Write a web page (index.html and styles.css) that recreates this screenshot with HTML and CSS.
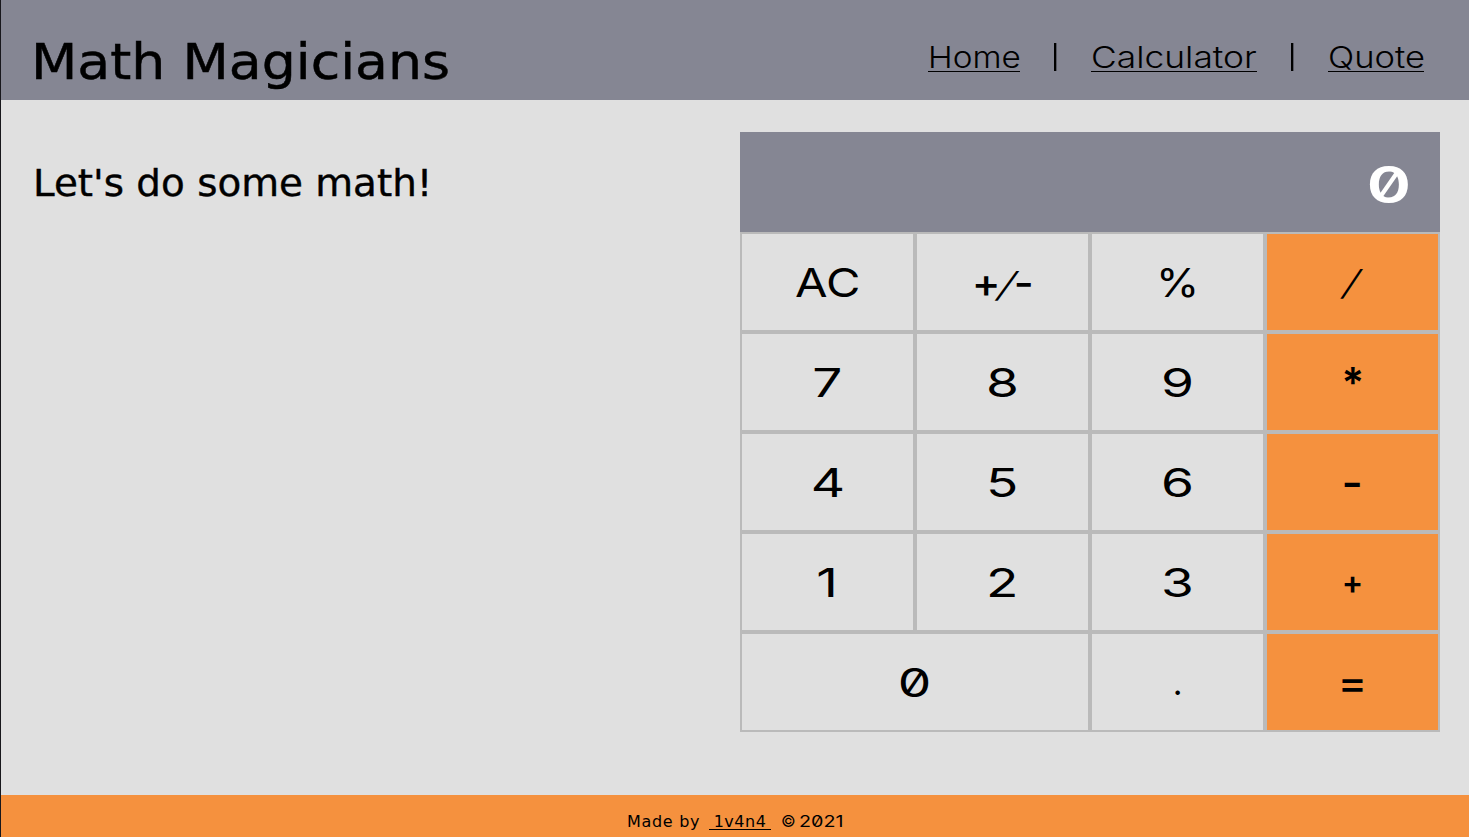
FILE: index.html
```html
<!DOCTYPE html>
<html lang="en">
<head>
<meta charset="utf-8">
<title>Math Magicians</title>
<link rel="stylesheet" href="styles.css">
</head>
<body>
<div class="app">
  <header class="header">
    <h1 class="title">Math Magicians</h1>
    <nav class="nav">
      <a class="nav-link home" href="#"><span>Home</span></a>
      <span class="divider"></span>
      <a class="nav-link calculator-link" href="#"><span>Calculator</span></a>
      <span class="divider"></span>
      <a class="nav-link quote" href="#"><span>Quote</span></a>
    </nav>
  </header>
  <main class="main">
    <h2 class="subtitle">Let's do some math!</h2>
    <section class="calculator">
      <div class="display"><span class="digit">0</span></div>
      <button class="key"><span class="letters">AC</span></button>
      <button class="key"><span class="sign">+<span class="slash">/</span>-</span></button>
      <button class="key"><span class="percent">%</span></button>
      <button class="key operator"><span class="slash">/</span></button>
      <button class="key"><span class="digit">7</span></button>
      <button class="key"><span class="digit">8</span></button>
      <button class="key"><span class="digit">9</span></button>
      <button class="key operator"><span class="star">*</span></button>
      <button class="key"><span class="digit">4</span></button>
      <button class="key"><span class="digit">5</span></button>
      <button class="key"><span class="digit">6</span></button>
      <button class="key operator"><span class="minus">-</span></button>
      <button class="key"><span class="digit">1</span></button>
      <button class="key"><span class="digit">2</span></button>
      <button class="key"><span class="digit">3</span></button>
      <button class="key operator"><span class="plus">+</span></button>
      <button class="key wide"><span class="digit">0</span></button>
      <button class="key"><span class="point">.</span></button>
      <button class="key operator"><span class="equals">=</span></button>
    </section>
  </main>
  <footer class="footer">
    <span class="made">Made by</span>
    <a class="author" href="#">1v4n4</a>
    <span class="copy">©</span>
    <span class="year">2021</span>
  </footer>
</div>
</body>
</html>
```
FILE: styles.css
```css
* { box-sizing: border-box; }

body {
  margin: 0;
  background: #e0e0e0;
  color: #000;
  font-family: "DejaVu Sans", sans-serif;
}

.app {
  display: flex;
  flex-direction: column;
  height: 837px;
  border-left: 1px solid #18171c;
}

.header {
  display: flex;
  justify-content: space-between;
  height: 100px;
  padding: 0 45px 0 30px;
  background: #858693;
}

.title {
  margin: 0;
  padding-top: 32px;
  font-size: 50px;
  font-weight: 400;
  line-height: 60px;
  -webkit-text-stroke: 0.5px #000;
  transform: scaleX(1.074);
  transform-origin: left;
  white-space: nowrap;
}

.nav {
  display: flex;
  padding-top: 43px;
}

.nav-link {
  height: 29px;
  border-bottom: 1px solid #000;
  color: #000;
  font-family: Inter, sans-serif;
  font-size: 30px;
  font-weight: 300;
  line-height: 29px;
  text-decoration: none;
  white-space: nowrap;
}

.nav-link span {
  display: inline-block;
  transform-origin: left;
}

.home { width: 92px; }
.home span { transform: scaleX(1.11); }
.calculator-link { width: 166px; }
.calculator-link span { transform: scaleX(1.18); }
.quote { width: 96px; }
.quote span { transform: scaleX(1.15); }

.divider {
  width: 3px;
  height: 28px;
  margin: 0 34px;
  border-right: 1px solid #585963;
  background: #000;
}

.main {
  display: flex;
  flex: 1;
  justify-content: space-between;
  align-items: flex-start;
  padding: 32px 29px 0 32px;
}

.subtitle {
  margin: 0;
  padding-top: 29px;
  font-size: 37.5px;
  font-weight: 400;
  line-height: 45px;
  -webkit-text-stroke: 0.4px #000;
  transform: scaleX(1.036);
  transform-origin: left;
  white-space: nowrap;
}

.calculator {
  display: grid;
  grid-template-columns: repeat(4, 175px);
  grid-template-rows: repeat(6, 100px);
  font-family: Inter, sans-serif;
  font-feature-settings: "zero";
}

.display {
  display: flex;
  grid-column: span 4;
  justify-content: flex-end;
  align-items: center;
  padding: 4px 34px 0 0;
  background: #858693;
  color: #fff;
  font-size: 51px;
  font-weight: 600;
}

.key {
  display: flex;
  justify-content: center;
  align-items: center;
  padding: 0;
  border: 2px solid #bababa;
  background: #e0e0e0;
  color: #000;
  font: inherit;
  font-size: 40px;
  font-feature-settings: inherit;
}

.key span, .display span { display: inline-block; }

.wide { grid-column: span 2; }
.operator { background: #f5913e; }

.digit { transform: scaleX(1.33); }
.letters { transform: scaleX(1.18); }
.sign { font-weight: 500; transform: scaleX(1.08); }
.percent { transform: scaleX(1.1); }
.slash {
  font-size: 34px;
  font-weight: 400;
  transform: skewX(-22deg);
}
.star { font-weight: 600; transform: scale(1.05); }
.minus { font-weight: 600; transform: scaleX(1.15); }
.plus { font-weight: 600; transform: scale(0.8); }
.equals { font-weight: 500; transform: scaleX(1.1); }
.point { transform: scale(0.85); }

.footer {
  display: flex;
  height: 42px;
  padding: 15px 0 0 626px;
  background: #f5913e;
  font-size: 16px;
  line-height: 23px;
}

.made { width: 82px; letter-spacing: 0.7px; }

.author {
  width: 62px;
  height: 20px;
  margin-right: 10px;
  border-bottom: 1px solid #000;
  color: #000;
  letter-spacing: 0.5px;
  text-align: center;
  text-decoration: none;
}

.copy { width: 18px; font-family: Inter, sans-serif; font-size: 16px; }
.year {
  font-family: Inter, sans-serif;
  font-feature-settings: "zero";
  transform: scaleX(1.23);
  transform-origin: left;
}
```
